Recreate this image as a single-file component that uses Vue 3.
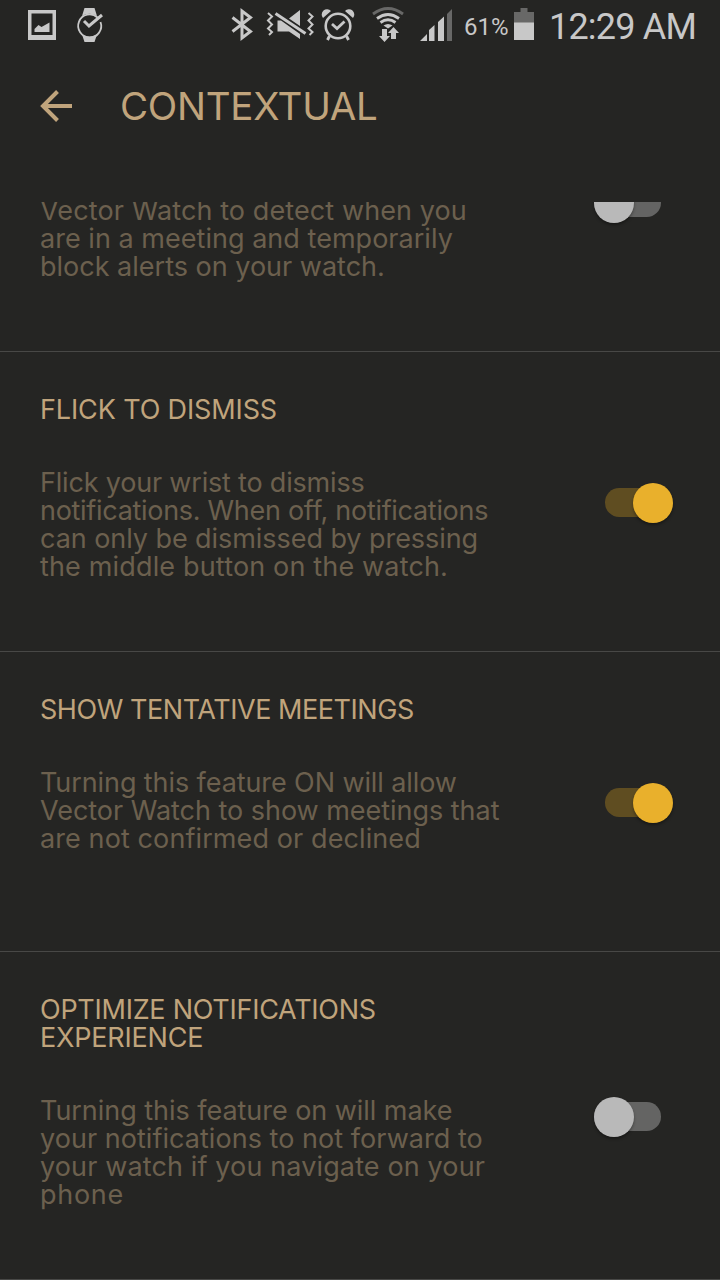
<script setup>
const rows = [
  {
    kind: 'cut',
    on: false,
    title: [],
    text: [
      { t: 'Vector Watch to detect when you', s: 0.1 },
      { t: 'are in a meeting and temporarily', s: 0.03 },
      { t: 'block alerts on your watch.', s: 0 },
    ],
  },
  {
    on: true,
    title: [{ t: 'FLICK TO DISMISS', s: -0.13 }],
    text: [
      { t: 'Flick your wrist to dismiss', s: -0.19 },
      { t: 'notifications. When off, notifications', s: -0.3 },
      { t: 'can only be dismissed by pressing', s: -0.06 },
      { t: 'the middle button on the watch.', s: 0.16 },
    ],
  },
  {
    on: true,
    title: [{ t: 'SHOW TENTATIVE MEETINGS', s: -0.45 }],
    text: [
      { t: 'Turning this feature ON will allow', s: -0.09 },
      { t: 'Vector Watch to show meetings that', s: -0.03 },
      { t: 'are not confirmed or declined', s: 0.1 },
    ],
  },
  {
    kind: 'tall',
    on: false,
    title: [
      { t: 'OPTIMIZE NOTIFICATIONS', s: -0.26 },
      { t: 'EXPERIENCE', s: -0.2 },
    ],
    text: [
      { t: 'Turning this feature on will make', s: -0.04 },
      { t: 'your notifications to not forward to', s: 0.04 },
      { t: 'your watch if you navigate on your', s: 0.13 },
      { t: 'phone', s: 0.7 },
    ],
  },
]
</script>

<template>
  <div class="screen">
    <div class="status">
      <svg class="icons" width="460" height="50" viewBox="0 0 460 50" fill="#c8c8c8">
        <path fill-rule="evenodd" d="M28 10h28v30H28zM31.500 13.500v21.500h21V13.500z" />
        <path d="M34.500 32v-3l4-4 3 2 8-4.500V32z" />
        <path d="M84.500 8h10l2.500 8a15 15 0 0 0-15 0zM82 34.500a15 15 0 0 0 15 0L94.500 42h-10z" />
        <path d="M97.500 17.500A11.500 11.500 0 1 0 100.500 22" fill="none" stroke="#c8c8c8" stroke-width="1.800" />
        <path d="M84 21l5 5 13-11" fill="none" stroke="#c8c8c8" stroke-width="3" />
        <path d="M232.500 17.500L250.500 31.500 242 38V11l8.500 6.500L232.500 31.500" fill="none" stroke="#c8c8c8" stroke-width="3" />
        <path d="M268 13l4 3.500-4 4 4 4-4 4 4 3.500-3 3M308.500 13l4 3.500-4 4 4 4-4 4 4 3.500-3 3" fill="none" stroke="#c8c8c8" stroke-width="2" />
        <path d="M277.500 20.500h3.500L300 34v5l-11-7.500h-11.500zM289 18.500l11-8.500v16z" />
        <path d="M275.500 13.500l30 20" fill="none" stroke="#c8c8c8" stroke-width="3" />
        <circle cx="338" cy="26" r="12.300" fill="none" stroke="#c8c8c8" stroke-width="2.600" />
        <path d="M332 24l5 4.500 7.500-7M329.500 36l-2 4M346.500 36l2 4" fill="none" stroke="#c8c8c8" stroke-width="2.800" />
        <path d="M323 18a5 5 0 0 1 8-7zM353 18a5 5 0 0 0-8-7z" />
        <g fill="none" stroke="#c8c8c8" stroke-width="2.800">
          <path d="M373 14q15-11 30 0" stroke="#686867" />
          <path d="M377 18.500q11-8 22 0M380.500 22.500q7.500-5.500 15 0" />
        </g>
        <path d="M383.500 25.500q4.500-3 9 0l-4.500 3z" />
        <path d="M382 29h5v7h3l-5.500 6-5.500-6h3zM391 39v-6h-3l5.500-6 5.500 6h-3v6z" />
        <path d="M420 41l7-7v7zM429 41V30l5.500-5v16zM438 41V22l6-5.500V41z" />
        <path d="M447 41V14l5-5v32z" fill="#686867" />
      </svg>
      <span class="percent">61%</span>
      <svg class="battery" width="20" height="50" viewBox="0 0 20 50">
        <path d="M0 12h6.500V8h7v4H20v11H0z" fill="#686867" />
        <path d="M0 22.500h20V40H0z" fill="#c8c8c8" />
      </svg>
      <span class="clock">12:29 AM</span>
    </div>
    <header class="bar">
      <svg width="34" height="34" viewBox="0 0 34 34" fill="none" stroke="#c0a47c" stroke-width="4">
        <path d="M33 17H5M18.500 2.500L4 17l14.500 14.500" />
      </svg>
      <h1>CONTEXTUAL</h1>
    </header>
    <main>
      <section v-for="(row, i) in rows" :key="i" class="row" :class="row.kind">
        <div class="copy">
          <h2 v-if="row.title.length">
            <span v-for="l in row.title" :key="l.t" :style="{ letterSpacing: l.s + 'px' }">{{ l.t }}</span>
          </h2>
          <p>
            <span v-for="l in row.text" :key="l.t" :style="{ letterSpacing: l.s + 'px' }">{{ l.t }}</span>
          </p>
        </div>
        <div class="switch" :class="{ on: row.on }"><i></i></div>
      </section>
    </main>
  </div>
</template>

<style>
body { background: #252523; }
</style>

<style scoped>
.screen { width: 720px; height: 1280px; overflow: hidden; background: #252523; font-family: Inter, "Liberation Sans", sans-serif; }
.status { height: 50px; display: flex; color: #c8c8c8; font-family: Roboto, sans-serif; line-height: 52px; white-space: nowrap; }
.icons { flex: none; }
.percent { width: 54px; box-sizing: border-box; padding-left: 4px; font-size: 24px; flex: none; line-height: 54px; }
.battery { flex: none; }
.clock { font-size: 36px; margin-left: 15px; line-height: 54px; letter-spacing: -0.8px; }
.bar { height: 152px; box-sizing: border-box; padding: 39px 0 0 39px; display: flex; align-items: flex-start; }
.bar h1 { margin: -3px 0 0 47px; font-size: 38.5px; line-height: 40px; font-weight: 400; color: #c0a47c; letter-spacing: -0.28px; }
.row { height: 300px; box-sizing: border-box; border-bottom: 1px solid #484846; padding: 44px 47px 0 40px; display: flex; justify-content: space-between; overflow: hidden; }
.tall { height: 328px; }
.cut { height: 150px; padding-top: 0; }
.cut p { margin-top: -5px; }
.copy { font-size: 27px; line-height: 28px; white-space: nowrap; }
.copy span { display: block; width: max-content; }
h2 { margin: 0 0 45px; font-size: 27px; font-weight: 400; color: #c0a47c; }
p { margin: 0; color: #6c604e; font-weight: 400; }
.switch { width: 80px; height: 40px; margin-top: 86.5px; display: flex; align-items: center; flex: none; }
.tall .switch { margin-top: 100.5px; }
.cut .switch { margin-top: -19.5px; }
.switch::before { content: ""; width: 67px; height: 28.500px; margin-left: 1px; border-radius: 14.250px; background: #646463; }
.switch i { width: 40px; height: 40px; margin-left: -67.500px; border-radius: 50%; background: #b9b9b9; box-shadow: 0 2px 3px rgba(0, 0, 0, .35); z-index: 1; }
.switch.on::before { margin-left: 12px; background: #5f4d21; }
.switch.on i { margin-left: -39px; background: #e9b02c; }
</style>
